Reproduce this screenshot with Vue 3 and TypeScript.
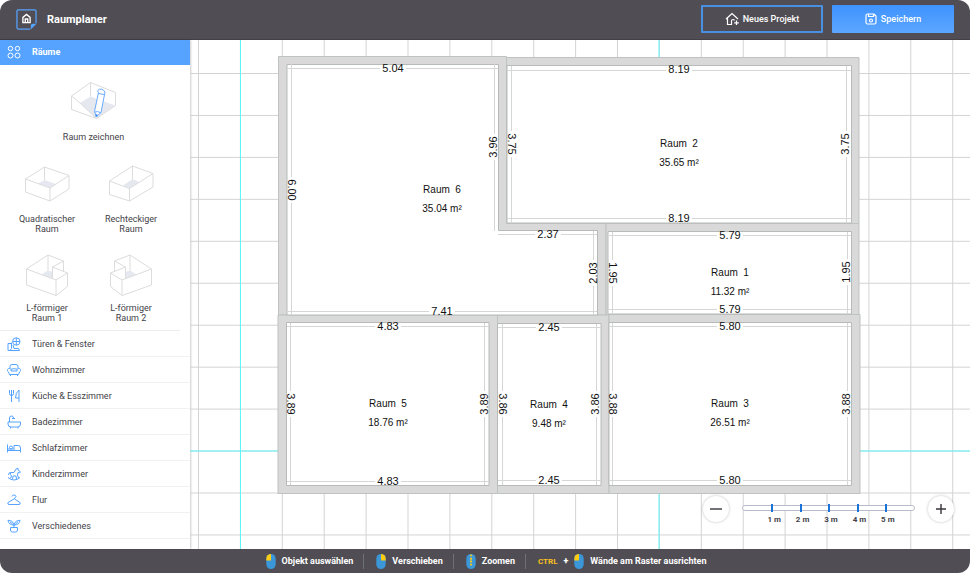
<script setup lang="ts">
import { ref } from 'vue'

interface Category { name: string; icon: string }
interface RoomTemplate { name: string[]; floor: string; lines: string; pencil?: boolean }
interface Label { x: number; y: number; text: string }
interface Dimension extends Label { x1: number; y1: number; x2: number; y2: number; turn: 0 | 90 | -90 }

const categories: Category[] = [
  { name: 'Türen & Fenster', icon: 'M1 6.500h3M1 6.500v7h2M4.500 5.500v6L3 13.500h9.500L11.500 11.500H7L6 8M13 4.500a3.700 3.700 0 1 1-7.400 0a3.700 3.700 0 1 1 7.400 0M5.600 4.500H13M9.300 .8v7.400' },
  { name: 'Wohnzimmer', icon: 'M3 5.500V3.500Q3 1.500 5 1.500h4q2 0 2 2v2M1.500 9A1.900 1.900 0 1 1 4 6.500V8h6V6.500A1.900 1.900 0 1 1 12.500 9L11.500 11.500h-9zM3.500 11.500v1.500M10.500 11.500v1.500M4 6.200q3-1 6 0' },
  { name: 'Küche & Esszimmer', icon: 'M2.500 1v3.500q0 2 2 2t2-2V1M4.500 1v12M12 1v12M12 1Q8.500 3.500 8.500 9H12' },
  { name: 'Badezimmer', icon: 'M1 7h12.500v2q0 3-3 3H4q-3 0-3-3zM2.500 7V3Q2.500 1 4.500 1t2 2M5 3.500h3M3.500 12v1.500M11 12v1.500' },
  { name: 'Schlafzimmer', icon: 'M.5 3.500v8M.5 9.500h13v2M13.500 9.500V7q0-2.500-2.500-2.500H7v5M2.500 6.500a1.500 1.500 0 1 0 3 0a1.500 1.500 0 1 0-3 0M.5 8h6' },
  { name: 'Kinderzimmer', icon: 'M1 10.500q6 5 12 0M3.500 11.500L4.500 9Q3 7.500 3.500 5.500H7L9 2l2-.8V3l2.500 1.800-1 1.200L11 5.500 10.500 8l1 3M5.500 12L6 9h3l.5 3M3.500 5.500Q1.500 5.500 1.500 8' },
  { name: 'Flur', icon: 'M5 3.500a2 1.500 0 1 1 2.500 1.500V6L13 9.500q.8 2-1 2H2q-1.800 0-1-2L7 6' },
  { name: 'Verschiedenes', icon: 'M3.500 8.500h7v2.500q0 2-2 2h-3q-2 0-2-2zM7 8.500V5.500M7 6Q1.500 6 1 1.200q4.500 0 6 3.800M7 5q1.500-3.800 6-3.800Q12.500 6 7 6M3 2.800L7 6.500M11 2.800L7 6.500' },
]

const drawTool: RoomTemplate = {
  name: ['Raum zeichnen'],
  floor: '10,22 20.500,15.500 45,24.500 26.500,37.500',
  lines: 'M1.500 15L20.500 1.500L45.500 11.500V24.500L26.500 37.500L1.500 28.500ZM1.500 15L10 22L26.500 37.500M20.500 1.500V15.500',
  pencil: true,
}

const templates: RoomTemplate[] = [
  {
    name: ['Quadratischer', 'Raum'],
    floor: '15,18.500 21.500,15 33,19 27,23',
    lines: 'M2.500 14L21.500 2L46 10.500V24L27 36L2.500 27ZM2.500 14L27 23L46 10.500M27 23V36M21.500 2V15',
  },
  {
    name: ['Rechteckiger', 'Raum'],
    floor: '16,20.500 25.500,14 32,17 22.500,23.500',
    lines: 'M2.500 16L25.500 1L46 8.500V22L22.500 36L2.500 29.500ZM2.500 16L22.500 23.500L46 8.500M22.500 23.500V36M25.500 1V14',
  },
  {
    name: ['L-förmiger', 'Raum 1'],
    floor: '18.500,20.500 25,16.500 29.500,18 29.500,24.500',
    lines: 'M3.500 15L25 1L40.500 7V17.500M3.500 15V31L33 41.500L44.500 32.500V19L29.500 13L40.500 7M3.500 15L33 26L44.500 19M33 26V41.500M25 1V16.500M29.500 13V24.500',
  },
  {
    name: ['L-förmiger', 'Raum 2'],
    floor: '29.500,20.500 23,16.500 18.500,18 18.500,24.500',
    lines: 'M44.500 15L23 1L7.500 7V17.500M44.500 15V31L15 41.500L3.500 32.500V19L18.500 13L7.500 7M44.500 15L15 26L3.500 19M15 26V41.500M23 1V16.500M18.500 13V24.500',
  },
]

/* Plan geometry, in plan units (1 unit = 1 px at the default zoom). */
const walls = [
  'M88.500 16.500H316.500V183.500H416V275H88.500Z',
  'M316.500 17.500H669V183.500H316.500Z',
  'M416 183.500H669V275H416Z',
  'M307.500 275H419V453.500H307.500Z',
  'M88 275H307.500V453.500H88Z',
  'M419 274.500H670V453.500H419Z',
]
const floors = [
  'M97 24.500H308.500V190.500H407.500V275H97Z',
  'M317 25.500H661.500V183H317Z',
  'M418 191.500H661.500V274H418Z',
  'M307.500 283.500H411V445.500H307.500Z',
  'M96.500 282.500H299V445.500H96.500Z',
  'M419 282.500H661.500V445.500H419Z',
]
const dimensions: Dimension[] = [
  { x1: 97, y1: 28.5, x2: 308, y2: 28.5, x: 203, y: 28, text: '5.04', turn: 0 },
  { x1: 101.5, y1: 24, x2: 101.5, y2: 275, x: 102, y: 150, text: '6.00', turn: 90 },
  { x1: 304.5, y1: 24, x2: 304.5, y2: 191, x: 303, y: 107, text: '3.96', turn: -90 },
  { x1: 308, y1: 194.5, x2: 407, y2: 194.5, x: 358, y: 194, text: '2.37', turn: 0 },
  { x1: 403.5, y1: 191, x2: 403.5, y2: 275, x: 403, y: 233, text: '2.03', turn: -90 },
  { x1: 97, y1: 271.5, x2: 407, y2: 271.5, x: 252, y: 271, text: '7.41', turn: 0 },
  { x1: 317, y1: 30.5, x2: 661, y2: 30.5, x: 489, y: 29, text: '8.19', turn: 0 },
  { x1: 317, y1: 178.5, x2: 661, y2: 178.5, x: 489, y: 178, text: '8.19', turn: 0 },
  { x1: 321.5, y1: 26, x2: 321.5, y2: 183, x: 322, y: 104, text: '3.75', turn: 90 },
  { x1: 656.5, y1: 26, x2: 656.5, y2: 183, x: 655, y: 104, text: '3.75', turn: -90 },
  { x1: 418, y1: 195.5, x2: 661, y2: 195.5, x: 540, y: 195, text: '5.79', turn: 0 },
  { x1: 418, y1: 269.5, x2: 661, y2: 269.5, x: 540, y: 269, text: '5.79', turn: 0 },
  { x1: 422.5, y1: 192, x2: 422.5, y2: 274, x: 423, y: 233, text: '1.95', turn: 90 },
  { x1: 657.5, y1: 192, x2: 657.5, y2: 274, x: 656, y: 232, text: '1.95', turn: -90 },
  { x1: 97, y1: 286.5, x2: 299, y2: 286.5, x: 198, y: 286, text: '4.83', turn: 0 },
  { x1: 97, y1: 441.5, x2: 299, y2: 441.5, x: 198, y: 441, text: '4.83', turn: 0 },
  { x1: 100.5, y1: 283, x2: 100.5, y2: 445, x: 101, y: 364, text: '3.89', turn: 90 },
  { x1: 294.5, y1: 283, x2: 294.5, y2: 445, x: 294, y: 364, text: '3.89', turn: -90 },
  { x1: 308, y1: 287.5, x2: 411, y2: 287.5, x: 359, y: 287, text: '2.45', turn: 0 },
  { x1: 308, y1: 440.5, x2: 411, y2: 440.5, x: 359, y: 440, text: '2.45', turn: 0 },
  { x1: 312.5, y1: 284, x2: 312.5, y2: 445, x: 313, y: 364, text: '3.86', turn: 90 },
  { x1: 406.5, y1: 284, x2: 406.5, y2: 445, x: 405, y: 364, text: '3.86', turn: -90 },
  { x1: 419, y1: 286.5, x2: 661, y2: 286.5, x: 540, y: 286, text: '5.80', turn: 0 },
  { x1: 419, y1: 440.5, x2: 661, y2: 440.5, x: 540, y: 440, text: '5.80', turn: 0 },
  { x1: 422.5, y1: 283, x2: 422.5, y2: 445, x: 423, y: 364, text: '3.88', turn: 90 },
  { x1: 657.5, y1: 283, x2: 657.5, y2: 445, x: 656, y: 364, text: '3.88', turn: -90 },
]
const rooms = [
  { x: 252, y: 149, name: 'Raum  6', area: '35.04 m²' },
  { x: 489, y: 103, name: 'Raum  2', area: '35.65 m²' },
  { x: 540, y: 232, name: 'Raum  1', area: '11.32 m²' },
  { x: 198, y: 363, name: 'Raum  5', area: '18.76 m²' },
  { x: 359, y: 364, name: 'Raum  4', area: '9.48 m²' },
  { x: 540, y: 363, name: 'Raum  3', area: '26.51 m²' },
]

const scale = ['1 m', '2 m', '3 m', '4 m', '5 m']
const hints = [
  { text: 'Objekt auswählen', button: 'left', key: '' },
  { text: 'Verschieben', button: 'right', key: '' },
  { text: 'Zoomen', button: 'wheel', key: '' },
  { text: 'Wände am Raster ausrichten', button: 'left', key: 'CTRL' },
]

const zoom = ref(1)
function changeZoom(factor: number): void {
  zoom.value = Math.min(4, Math.max(0.25, zoom.value * factor))
}
</script>

<template>
  <div class="app">
    <header class="topbar">
      <svg class="logo" viewBox="0 0 22 22" aria-hidden="true">
        <path d="M21 15V2.500Q21 1 19.500 1h-17Q1 1 1 2.500v17Q1 21 2.500 21H15" fill="none" stroke="#55a3ff" stroke-width="1.300" />
        <path d="M15.500 21.500v-4q0-2 2-2h4z" fill="#55a3ff" />
        <path d="M7.200 14.300V8.800L11 5.700l3.800 3.100v5.500zM9.700 14v-3.500h2.600V14" fill="none" stroke="#fff" stroke-width="1.400" />
      </svg>
      <h1>Raumplaner</h1>
      <button type="button" class="action outline">
        <svg class="home" viewBox="0 0 14 14" aria-hidden="true">
          <path d="M1 7L7 1.500L13 7M2.500 6v6.500h4V9q0-1.500 1.500-1.500t1.500 1M11.500 8.500v4.500M9.200 10.800h4.600" />
        </svg>
        Neues Projekt
      </button>
      <button type="button" class="action primary">
        <svg class="disk" viewBox="0 0 12 12" aria-hidden="true">
          <path d="M2.500 1H9l2 2v6.500q0 1.500-1.500 1.500h-7Q1 11 1 9.500v-7Q1 1 2.500 1zM3.500 1v2.500h5V1M4.500 7.500a1.500 1.500 0 1 0 3 0a1.500 1.500 0 1 0-3 0" />
        </svg>
        Speichern
      </button>
    </header>

    <div class="workspace">
      <aside class="sidebar">
        <button type="button" class="category active" aria-expanded="true">
          <svg viewBox="0 0 14 14" aria-hidden="true">
            <circle cx="3.500" cy="3.500" r="2.200" /><circle cx="10.500" cy="3.500" r="2.200" />
            <circle cx="3.500" cy="10.500" r="2.500" /><circle cx="10.500" cy="10.500" r="2.500" />
          </svg>
          Räume
        </button>
        <div class="templates">
          <button v-for="t in [drawTool, ...templates]" :key="t.name.join(' ')" type="button" class="template" :class="{ wide: t.pencil }">
            <svg viewBox="0 0 48 43" aria-hidden="true">
              <polygon :points="t.floor" fill="#e6e8f0" />
              <path :d="t.lines" fill="none" stroke="#dcdcde" />
              <g v-if="t.pencil" fill="#fff" stroke="#69aaff">
                <path d="M28.500 11.500L27.500 9.800Q29 7.500 31.500 8.200T35 11L31 31.500L26.500 35.500L24.500 30.500Z" />
                <path d="M28.300 12.500L34.500 13.500M24.800 31Q27.500 29.800 31 31.800" />
                <circle cx="26.500" cy="34.500" r="1" fill="#358cff" />
              </g>
            </svg>
            <span v-for="line in t.name" :key="line">{{ line }}</span>
          </button>
        </div>
        <button v-for="c in categories" :key="c.name" type="button" class="category">
          <svg viewBox="0 0 14 14" aria-hidden="true"><path :d="c.icon" /></svg>
          {{ c.name }}
        </button>
      </aside>

      <main class="canvas">
        <svg class="plan" role="img" aria-label="Grundriss">
          <defs>
            <pattern id="grid" x="8" y="33" width="41.900" height="41.950" patternUnits="userSpaceOnUse">
              <path d="M.5 0V42M0 .5H42" stroke="#d3d3d3" fill="none" />
            </pattern>
          </defs>
          <rect width="100%" height="100%" fill="url(#grid)" />
          <g class="axis">
            <line x1="50.500" y1="0" x2="50.500" y2="100%" />
            <line x1="469" y1="0" x2="469" y2="100%" />
            <line x1="0" y1="411" x2="100%" y2="411" />
          </g>
          <g :transform="`scale(${zoom})`">
            <path v-for="d in walls" :key="d" :d="d" class="wall" />
            <path v-for="d in floors" :key="d" :d="d" class="floor" />
            <line v-for="(d, i) in dimensions" :key="`l${i}`" :x1="d.x1" :y1="d.y1" :x2="d.x2" :y2="d.y2" class="measure" />
            <g v-for="(d, i) in dimensions" :key="`t${i}`" :transform="`translate(${d.x} ${d.y}) rotate(${d.turn})`">
              <rect x="-13" y="-2" width="26" height="4" fill="#fff" />
              <text y="4" class="length">{{ d.text }}</text>
            </g>
            <g v-for="r in rooms" :key="r.name">
              <text :x="r.x" :y="r.y + 4">{{ r.name }}</text>
              <text :x="r.x" :y="r.y + 23">{{ r.area }}</text>
            </g>
          </g>
        </svg>

        <div class="zoombar">
          <button type="button" class="round" aria-label="Verkleinern" @click="changeZoom(0.8)">
            <svg viewBox="0 0 14 14" aria-hidden="true"><path d="M1 7h12" /></svg>
          </button>
          <div class="scale">
            <div class="track"><i v-for="s in scale" :key="s"></i></div>
            <div class="units"><span v-for="s in scale" :key="s">{{ s }}</span></div>
          </div>
          <button type="button" class="round" aria-label="Vergrößern" @click="changeZoom(1.25)">
            <svg viewBox="0 0 14 14" aria-hidden="true"><path d="M2 7h10M7 2v10" /></svg>
          </button>
        </div>
      </main>
    </div>

    <footer class="hints">
      <div v-for="h in hints" :key="h.text" class="hint">
        <template v-if="h.key"><kbd>{{ h.key }}</kbd><b>+</b></template>
        <svg viewBox="0 0 10 16" aria-hidden="true">
          <rect width="10" height="16" rx="5" fill="#3b97d8" />
          <path v-if="h.button === 'left'" d="M0 7V5a5 5 0 0 1 5-5v7z" fill="#fc1" />
          <path v-else-if="h.button === 'right'" d="M10 7V5a5 5 0 0 0-5-5v7z" fill="#fc1" />
          <path v-else d="M5 0L6.500 2.500h-3zM4 4h2v2H4zM4 7h2v2H4zM3.500 10.500h3L5 13z" fill="#fc1" />
        </svg>
        <span>{{ h.text }}</span>
      </div>
    </footer>
  </div>
</template>

<style>
body { margin: 0; background: #fff; }
</style>

<style scoped>
.app {
  display: flex;
  flex-direction: column;
  height: calc(100vh - 1px);
  overflow: hidden;
  border-radius: 12px;
  font-family: Roboto, "Liberation Sans", sans-serif;
  font-size: 9px;
  color: #434248;
}
button { font: inherit; color: inherit; border: 0; padding: 0; cursor: pointer; background: none; }
.topbar {
  display: flex;
  align-items: center;
  box-sizing: border-box;
  height: 40px;
  flex: none;
  padding: 0 16px 1px;
  background: #504e54;
  border-bottom: 1px solid #434146;
  color: #fff;
}
.logo { width: 21px; height: 21px; }
h1 { flex: 1; margin: 0 0 0 10px; font-size: 11px; font-weight: 700; }
.action {
  display: flex;
  align-items: center;
  justify-content: center;
  gap: 4px;
  box-sizing: border-box;
  width: 122px;
  height: 28px;
  margin-left: 9px;
  border-radius: 1px;
  font-weight: 500;
}
.outline { border: 2px solid #4a90e2; }
.primary { background: linear-gradient(#3f93ff, #5ba6ff); }
.action svg { fill: none; stroke: #fff; stroke-width: 1.2; }
.home { width: 14px; height: 14px; }
.disk { width: 12px; height: 12px; }

.workspace { display: flex; flex: 1; min-height: 0; }
.sidebar {
  position: relative;
  display: flex;
  flex-direction: column;
  flex: none;
  width: 190px;
  background: #fff;
  box-shadow: 1px 0 2px rgba(0, 0, 0, 0.2);
}
.category {
  display: flex;
  align-items: center;
  gap: 11px;
  box-sizing: border-box;
  height: 26px;
  flex: none;
  padding: 0 7px;
  border-bottom: 1px solid #f1f1f1;
  text-align: left;
}
.category svg { width: 14px; height: 14px; fill: none; stroke: #55a3ff; }
.category.active { height: 25px; padding-bottom: 1px; border: 0; background: #55a3ff; color: #fff; font-weight: 700; }
.category.active svg { stroke: #fff; }
.templates {
  display: grid;
  grid-template-columns: 84px 84px;
  row-gap: 20px;
  padding: 16px 0 7px 5px;
  width: 175px;
  border-bottom: 1px solid #ededed;
}
.template { display: flex; flex-direction: column; align-items: center; line-height: 10px; }
.template svg { width: 48px; height: 43px; margin-bottom: 6px; }
.template.wide { grid-column: 1 / 3; padding-left: 9px; margin-bottom: 3px; }
.template.wide svg { margin-bottom: 8px; }

.canvas { position: relative; flex: 1; min-width: 0; overflow: hidden; }
.plan { display: block; width: 100%; height: 100%; }
.plan text { font: 10px "Liberation Sans", sans-serif; text-anchor: middle; white-space: pre; fill: #111; }
.plan .length { font-size: 11px; }
.axis line { stroke: #5ff6fa; stroke-width: 1; }
.wall { fill: #d9d9d9; stroke: #bec2c0; }
.floor { fill: #fff; stroke: #b6bbb9; }
.measure { stroke: #d6d6d6; }
.zoombar { position: absolute; right: 16px; bottom: 24px; display: flex; align-items: flex-start; gap: 13px; }
.round {
  display: flex;
  align-items: center;
  justify-content: center;
  width: 26px;
  height: 26px;
  border-radius: 50%;
  background: #fff;
  box-shadow: 0 0 3px rgba(0, 0, 0, 0.25);
}
.round svg { width: 14px; height: 14px; fill: none; stroke: #38363d; stroke-width: 1.4; }
.scale { width: 173px; padding-top: 9px; font-size: 8px; font-weight: 700; }
.track {
  display: flex;
  align-items: center;
  justify-content: space-between;
  box-sizing: border-box;
  height: 6px;
  padding: 0 27px 0 28px;
  border: 1px solid #b9bac9;
  border-radius: 3px;
  background: #fff;
}
.track i { width: 2px; height: 8px; flex: none; background: #1a73d9; }
.units { display: flex; padding: 4px 13px 0 18px; line-height: 10px; }
.units span { flex: 1; text-align: center; }

.hints {
  display: flex;
  align-items: center;
  justify-content: center;
  height: 24px;
  flex: none;
  background: #504e54;
  color: #fff;
  font-weight: 700;
}
.hint { display: flex; align-items: center; gap: 6px; padding: 0 10px 0 12px; }
.hint + .hint { border-left: 1px solid #6d7077; }
.hint svg { width: 10px; height: 15px; }
kbd { font: inherit; font-size: 8px; color: #fcc01e; }
</style>
